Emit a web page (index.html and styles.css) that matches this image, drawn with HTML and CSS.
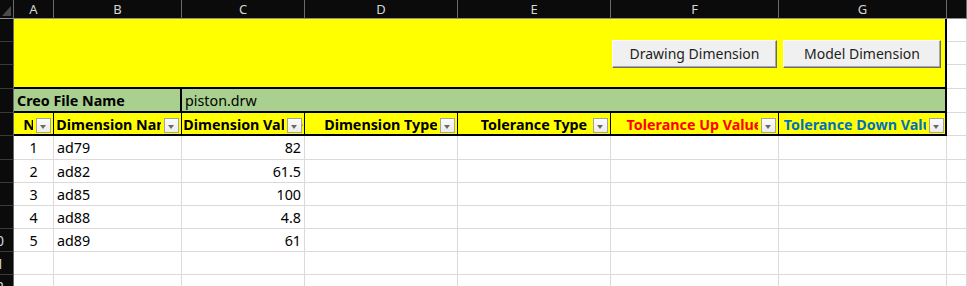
FILE: index.html
```html
<!DOCTYPE html>
<html lang="en">
<head>
  <meta charset="UTF-8" />
  <title>Creo Dimension Sheet</title>
  <link rel="stylesheet" href="styles.css">
</head>
<body>

  <div class="sheet">
    <!-- column headers -->
    <div class="corner">
      <svg width="14" height="19" viewBox="0 0 14 19"><polygon points="2,16 11,16 11,6" fill="#4a4a4a"/></svg>
    </div>
    <div class="colhead">A</div>
    <div class="colhead">B</div>
    <div class="colhead">C</div>
    <div class="colhead">D</div>
    <div class="colhead">E</div>
    <div class="colhead">F</div>
    <div class="colhead">G</div>
    <div class="colhead"></div>

    <!-- rows 1-3: banner with buttons -->
    <div class="rowhead"><span>1</span></div>
    <div class="banner">
      <button class="btn btn-drawing">Drawing Dimension</button>
      <button class="btn btn-model">Model Dimension</button>
    </div>
    <div class="cell"></div>
    <div class="rowhead"><span>2</span></div>
    <div class="cell"></div>
    <div class="rowhead"><span>3</span></div>
    <div class="cell"></div>

    <!-- row 4: file name -->
    <div class="rowhead"><span>4</span></div>
    <div class="file-label">Creo File Name</div>
    <div class="file-value">piston.drw</div>
    <div class="cell"></div>

    <!-- row 5: table header -->
    <div class="rowhead"><span>5</span></div>
    <div class="th"><span>No</span><i class="filter"></i></div>
    <div class="th"><span>Dimension Name</span><i class="filter"></i></div>
    <div class="th"><span>Dimension Value</span><i class="filter"></i></div>
    <div class="th"><span>Dimension Type</span><i class="filter"></i></div>
    <div class="th"><span>Tolerance Type</span><i class="filter"></i></div>
    <div class="th up"><span>Tolerance Up Value</span><i class="filter"></i></div>
    <div class="th down last"><span>Tolerance Down Value</span><i class="filter"></i></div>
    <div class="cell"></div>

    <!-- data rows -->
    <div class="rowhead"><span>6</span></div>
    <div class="cell num">1</div>
    <div class="cell">ad79</div>
    <div class="cell val">82</div>
    <div class="cell"></div>
    <div class="cell"></div>
    <div class="cell"></div>
    <div class="cell"></div>
    <div class="cell"></div>

    <div class="rowhead"><span>7</span></div>
    <div class="cell num">2</div>
    <div class="cell">ad82</div>
    <div class="cell val">61.5</div>
    <div class="cell"></div>
    <div class="cell"></div>
    <div class="cell"></div>
    <div class="cell"></div>
    <div class="cell"></div>

    <div class="rowhead"><span>8</span></div>
    <div class="cell num">3</div>
    <div class="cell">ad85</div>
    <div class="cell val">100</div>
    <div class="cell"></div>
    <div class="cell"></div>
    <div class="cell"></div>
    <div class="cell"></div>
    <div class="cell"></div>

    <div class="rowhead"><span>9</span></div>
    <div class="cell num">4</div>
    <div class="cell">ad88</div>
    <div class="cell val">4.8</div>
    <div class="cell"></div>
    <div class="cell"></div>
    <div class="cell"></div>
    <div class="cell"></div>
    <div class="cell"></div>

    <div class="rowhead"><span>10</span></div>
    <div class="cell num">5</div>
    <div class="cell">ad89</div>
    <div class="cell val">61</div>
    <div class="cell"></div>
    <div class="cell"></div>
    <div class="cell"></div>
    <div class="cell"></div>
    <div class="cell"></div>

    <div class="rowhead"><span>11</span></div>
    <div class="cell"></div>
    <div class="cell"></div>
    <div class="cell"></div>
    <div class="cell"></div>
    <div class="cell"></div>
    <div class="cell"></div>
    <div class="cell"></div>
    <div class="cell"></div>

    <div class="rowhead"><span>12</span></div>
    <div class="cell"></div>
    <div class="cell"></div>
    <div class="cell"></div>
    <div class="cell"></div>
    <div class="cell"></div>
    <div class="cell"></div>
    <div class="cell"></div>
    <div class="cell"></div>
  </div>

</body>
</html>
```

FILE: styles.css
```css
* {
  box-sizing: border-box;
}

html,
body {
  margin: 0;
  background: #fff;
  overflow: hidden;
}

body {
  font-family: 'Noto Sans', 'Open Sans', sans-serif;
  font-size: 14.3px;
  color: #000;
}

.sheet {
  display: grid;
  grid-template-columns: 14px 40px 128px 123px 153px 153px 168px 168px 1fr;
  grid-template-rows: 19px 23px 23px 24px 24px 23px 24px 23px 23px 23px 23px 23px 23px;
  width: 967px;
  height: 286px;
  overflow: hidden;
}

/* headers */
.corner {
  background: #0b0b0b;
  border-right: 1px solid #6a6a6a;
  border-bottom: 1px solid #8f8f8f;
}

.corner svg {
  display: block;
}

.colhead {
  background: #0b0b0b;
  color: #d6d6d6;
  font-size: 13px;
  display: flex;
  align-items: center;
  justify-content: center;
  border-right: 1px solid #6a6a6a;
  border-bottom: 1px solid #8f8f8f;
}

.rowhead {
  background: #0b0b0b;
  border-right: 1px solid #6a6a6a;
  border-bottom: 1px solid #3a3a3a;
  overflow: hidden;
  display: flex;
  align-items: center;
}

.rowhead span {
  display: block;
  flex: none;
  width: 24px;
  margin-left: -16px;
  text-align: center;
  color: #cdd8e4;
  font-size: 14px;
}

/* banner */
.banner {
  grid-row: span 3;
  grid-column: span 7;
  background: #ffff00;
  border-right: 2px solid #000;
  border-bottom: 2px solid #000;
  display: flex;
  justify-content: flex-end;
  align-items: flex-start;
  gap: 6px;
  padding: 21px 4px 0 0;
}

.btn {
  height: 28px;
  font-family: 'Noto Sans', sans-serif;
  font-size: 14px;
  color: #1e1e1e;
  background: #f0f0f0;
  border: 1px solid;
  border-color: #fafafa #6b6b6b #6b6b6b #fafafa;
  box-shadow: inset -1px -1px 0 #a8a8a8;
  padding: 0 0 1px;
}

.btn-drawing {
  width: 165px;
}

.btn-model {
  width: 158px;
}

/* file name row */
.file-label,
.file-value {
  background: #a9d08e;
  border-bottom: 2px solid #000;
  border-right: 2px solid #000;
  display: flex;
  align-items: center;
  padding-left: 3px;
  white-space: nowrap;
}

.file-label {
  grid-column: span 2;
  font-weight: bold;
}

.file-value {
  grid-column: span 5;
}

/* table header */
.th {
  position: relative;
  background: #ffff00;
  border-right: 1px solid #000;
  border-bottom: 2px solid #000;
  font-weight: bold;
  display: flex;
  align-items: center;
  justify-content: center;
  overflow: hidden;
  white-space: nowrap;
  padding-top: 1px;
}

.th span {
  flex: none;
}

.th.up {
  color: #ff0000;
}

.th.down {
  color: #0070c0;
}

.th.last {
  border-right-width: 2px;
}

.filter {
  position: absolute;
  right: 2px;
  bottom: 1px;
  width: 15px;
  height: 15px;
  background: linear-gradient(#fbfbfb, #ececec);
  border: 1px solid #a3a3a3;
  box-shadow: -3px 0 0 #ffff00;
}

.filter::after {
  content: '';
  position: absolute;
  left: 3px;
  top: 6px;
  border-left: 3.5px solid transparent;
  border-right: 3.5px solid transparent;
  border-top: 4px solid #6a6a6a;
}

.th.last .filter {
  right: 1px;
}

/* body cells */
.cell {
  border-right: 1px solid #dadada;
  border-bottom: 1px solid #dadada;
  display: flex;
  align-items: center;
  padding: 0 3px;
  white-space: nowrap;
  overflow: hidden;
}

.cell.num {
  justify-content: center;
}

.cell.val {
  justify-content: flex-end;
}
```
